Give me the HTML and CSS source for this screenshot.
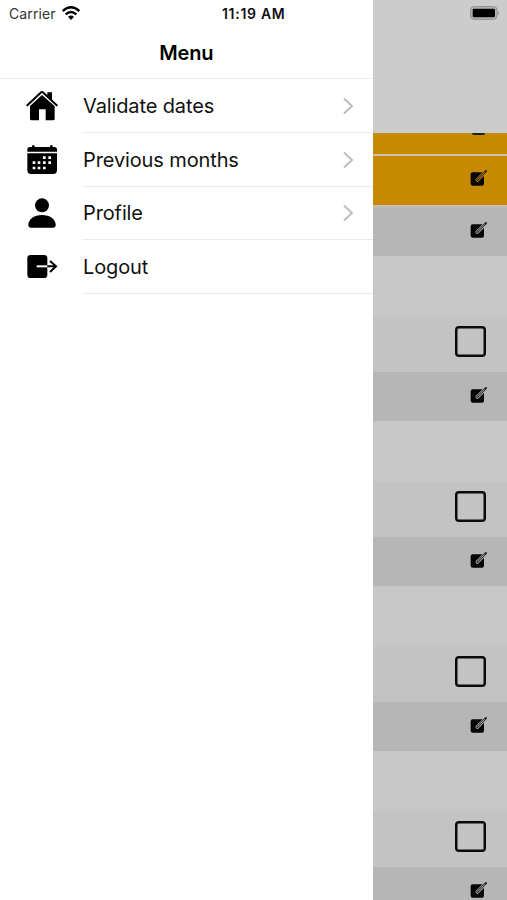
FILE: index.html
```
<!DOCTYPE html>
<html lang="en">
<head>
<meta charset="utf-8">
<title>Menu</title>
<link rel="stylesheet" href="styles.css">
</head>
<body>
<svg class="defs" width="0" height="0">
  <symbol id="edit" viewBox="0 0 54 54">
    <rect x="2" y="10" width="40" height="40" rx="6" fill="#050505"/>
    <path d="M22 33L43 12" stroke="var(--row)" stroke-width="11" stroke-linecap="round"/>
    <path d="M22 33L48 6" stroke="#222" stroke-width="6" stroke-linecap="round"/>
    <path d="M23 32L44 10" stroke="var(--row)" stroke-width="2.5"/>
  </symbol>
  <symbol id="chevron" viewBox="0 0 12 18"><path d="M2 1.5L10 9L2 16.5" fill="none" stroke="#bdbdbd" stroke-width="2"/></symbol>
</svg>
<div class="screen">
  <nav class="drawer">
    <div class="status">
      <span class="carrier">Carrier</span>
      <svg class="wifi" viewBox="0 0 54 42"><g fill="none" stroke="#000" stroke-width="7"><path d="M2 15Q27-7 52 15"/><path d="M11 25Q27 11 43 25"/></g><path d="M18 32Q27 25 36 32L27 42Z"/></svg>
      <span class="time">11:19 AM</span>
    </div>
    <h1 class="title">Menu</h1>
    <ul class="menu">
      <li class="item">
        <svg class="icon" viewBox="0 0 96 96"><path d="M12 48L48 15L86 48V86Q86 91 81 91H59V58H39V91H17Q12 91 12 86Z"/><path d="M4 46L44 8Q48 4 52 8L92 46" fill="none" stroke="#fff" stroke-width="11"/><path d="M64 7h14v26L64 20Z"/><path d="M4 46L44 8Q48 4 52 8L92 46" fill="none" stroke="#000" stroke-width="6" stroke-linecap="round"/></svg>
        <div class="line"><span class="label">Validate dates</span><svg class="chev"><use href="#chevron"/></svg></div>
      </li>
      <li class="item">
        <svg class="icon" viewBox="0 0 96 96"><path d="M4 23V17Q4 9 12 9H18V6Q22 0 26 6V9H72V6Q76 0 80 6V9H85Q93 9 93 17V23Z"/><path d="M4 28H93V79Q93 90 82 90H15Q4 90 4 79Z"/><g fill="#fff"><path d="M51 37h8v8h-8zM67 37h8v8h-8zM20 52h8v8h-8zM35 52h8v8h-8zM51 52h8v8h-8zM67 52h8v8h-8zM20 68h8v8h-8zM35 68h8v8h-8zM51 68h8v8h-8z"/></g></svg>
        <div class="line"><span class="label">Previous months</span><svg class="chev"><use href="#chevron"/></svg></div>
      </li>
      <li class="item">
        <svg class="icon" viewBox="0 0 96 96"><circle cx="48" cy="25" r="21"/><path d="M7 84C7 66 25 54 48 54S89 66 89 84Q89 92 81 92H15Q7 92 7 84Z"/></svg>
        <div class="line"><span class="label">Profile</span><svg class="chev"><use href="#chevron"/></svg></div>
      </li>
      <li class="item">
        <svg class="icon" viewBox="0 0 96 96"><rect x="4" y="12" width="60" height="69" rx="10"/><path d="M32 46H64" stroke="#fff" stroke-width="6"/><path d="M64 46H90M72 30L90 46L72 63" fill="none" stroke="#000" stroke-width="6"/></svg>
        <div class="line"><span class="label">Logout</span></div>
      </li>
    </ul>
  </nav>
  <main class="page">
    <header class="head"><svg class="battery" viewBox="0 0 90 42"><rect x="2" y="2" width="79" height="38" rx="10" fill="#b5b5b5" stroke="#8d8d8d" stroke-width="3"/><rect x="8" y="8" width="67" height="26" rx="4"/><path d="M84 14Q90 21 84 28Z" fill="#8d8d8d"/></svg></header>
    <div class="row gold clipped"><span class="stub"></span></div>
    <div class="row gold"><svg class="edit"><use href="#edit"/></svg></div>
    <div class="row gray"><svg class="edit"><use href="#edit"/></svg></div>
    <div class="gap"></div><div class="check"><span class="box"></span></div>
    <div class="row gray"><svg class="edit"><use href="#edit"/></svg></div>
    <div class="gap"></div><div class="check"><span class="box"></span></div>
    <div class="row gray"><svg class="edit"><use href="#edit"/></svg></div>
    <div class="gap"></div><div class="check"><span class="box"></span></div>
    <div class="row gray"><svg class="edit"><use href="#edit"/></svg></div>
    <div class="gap"></div><div class="check"><span class="box"></span></div>
    <div class="row gray"><svg class="edit"><use href="#edit"/></svg></div>
  </main>
</div>
</body>
</html>
```
FILE: styles.css
```
* { box-sizing: border-box; }
body { margin: 0; font-family: Inter, "Liberation Sans", sans-serif; color: #111; }
.defs { position: absolute; }
.screen { display: flex; width: 507px; height: 900px; overflow: hidden; background: #c7c7c7; }
.drawer { width: 372.5px; flex: none; background: #fff; }
.status { display: flex; align-items: center; height: 27px; padding-left: 9px; }
.carrier { width: 48px; font-size: 14px; letter-spacing: 0.1px; white-space: nowrap; color: #333; }
.wifi { width: 18px; height: 14px; margin: 0 0 1px 5px; }
.time { margin-left: 142px; font-size: 14px; font-weight: 600; letter-spacing: 0.7px; white-space: nowrap; }
.title { margin: 0; height: 52px; padding-top: 13px; border-bottom: 1px solid #eee; text-align: center; font-size: 20px; line-height: 26px; font-weight: 600; letter-spacing: -0.2px; color: #000; }
.menu { list-style: none; margin: 0; padding: 0; }
.item { display: flex; align-items: center; height: 53.75px; padding-left: 26px; }
.icon { width: 32px; height: 32px; flex: none; }
.line { display: flex; align-items: center; justify-content: space-between; flex: 1; height: 100%; margin-left: 25px; padding: 1px 19px 0 0; border-bottom: 1px solid #e9e9e9; }
.label { font-size: 20px; line-height: 24px; letter-spacing: -0.12px; white-space: nowrap; }
.chev { width: 12px; height: 18px; }
.page { flex: 1; }
.head { display: flex; justify-content: flex-end; height: 132.5px; padding: 6px 7px 0 0; background: #ccc; }
.battery { width: 30px; height: 14px; }
.row { display: flex; justify-content: flex-end; align-items: flex-start; height: 49px; padding: 13.5px 19px 0 0; background: var(--row); }
.gray { --row: #b6b6b6; }
.gold { --row: #c68900; height: 51.5px; border-bottom: 2px solid #c9c2b4; }
.clipped { height: 23px; padding: 0 22px 0 0; }
.stub { width: 13px; height: 2px; background: #222; border-radius: 0 0 2px 2px; }
.edit { width: 18px; height: 18px; }
.gap { height: 61px; background: #c7c7c7; }
.check { display: flex; justify-content: flex-end; height: 55px; padding: 9px 21.5px 0 0; background: #c3c3c3; }
.box { width: 31px; height: 31px; border: 2px solid #0a0a0a; border-radius: 4px; box-shadow: inset 0 0 0 0.5px #0a0a0a; }
```
